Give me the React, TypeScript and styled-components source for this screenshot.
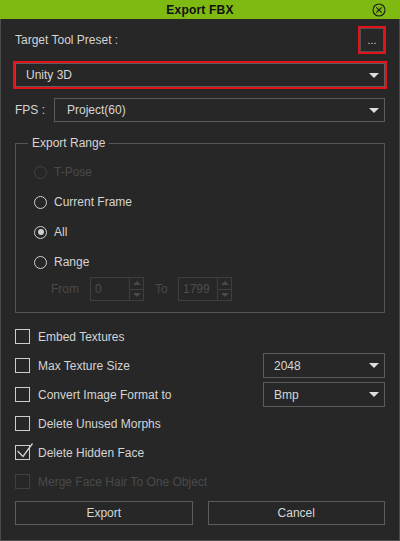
import React from "react";
import styled, { createGlobalStyle } from "styled-components";

const GlobalStyle = createGlobalStyle`
  html, body {
    margin: 0;
    padding: 0;
    background: #272727;
  }
  body {
    font-family: "Liberation Sans", Arial, sans-serif;
    font-size: 12px;
  }
`;

const Dialog = styled.div`
  width: 400px;
  height: 541px;
  display: flex;
  flex-direction: column;
  background: #272727;
  color: #d4d4d4;
`;

const TitleBar = styled.div`
  height: 19px;
  flex: none;
  display: grid;
  grid-template-columns: 1fr auto 1fr;
  align-items: center;
  padding: 0 14px;
  background: #7fba13;
  color: #111;
`;

const Title = styled.div`
  grid-column: 2;
  font-size: 12px;
  font-weight: bold;
  letter-spacing: 0.2px;
`;

const CloseIcon = styled.svg`
  grid-column: 3;
  justify-self: end;
  width: 14px;
  height: 14px;
  display: block;
`;

const Body = styled.div`
  flex: 1;
  display: flex;
  flex-direction: column;
  padding: 0 14px;
  border: 1px solid #4c4c4c;
  border-top: none;
`;

const PresetRow = styled.div`
  margin-top: 9px;
  height: 24px;
  display: flex;
  align-items: center;
  justify-content: space-between;
`;

const DotsButton = styled.div`
  width: 24px;
  height: 24px;
  box-sizing: border-box;
  margin-right: 1px;
  border: 1px solid #4e4e4e;
  box-shadow: 0 0 0 2px #e8111a;
  display: flex;
  align-items: flex-end;
  justify-content: center;
  padding-bottom: 7px;
  line-height: 8px;
  font-size: 11px;
  color: #d4d4d4;
`;

const Select = styled.div<{ $highlight?: boolean }>`
  height: 24px;
  box-sizing: border-box;
  display: flex;
  align-items: center;
  justify-content: space-between;
  padding: 0 5px 0 10px;
  border: 1px solid #5c5c5c;
  box-shadow: ${(p) => (p.$highlight ? "0 0 0 2px #e8111a" : "none")};
  color: #d6d6d6;
`;

const Caret = () => (
  <svg width="10" height="5" viewBox="0 0 10 5" style={{ display: "block" }}>
    <polygon points="0,0 10,0 5,5" fill="#dedede" />
  </svg>
);

const UnitySelect = styled(Select)`
  margin-top: 11px;
`;

const FpsRow = styled.div`
  margin-top: 11px;
  display: flex;
  align-items: center;
`;

const FpsLabel = styled.div`
  width: 39px;
`;

const FpsSelect = styled(Select)`
  flex: 1;
  padding-left: 12px;
`;

const GroupBox = styled.fieldset`
  margin: 14px 0 0;
  padding: 7px 0 11px 0;
  border: 1px solid #565656;
  min-width: 0;
`;

const Legend = styled.legend`
  margin-left: 12px;
  padding: 0 4px;
  line-height: 14px;
  color: #d4d4d4;
`;

const RangeList = styled.div`
  padding-left: 18px;
`;

const RadioRow = styled.div<{ $disabled?: boolean }>`
  height: 30px;
  display: flex;
  align-items: center;
  gap: 7px;
  color: ${(p) => (p.$disabled ? "#4a4a4a" : "#d4d4d4")};
`;

const RadioDot = styled.span<{ $checked?: boolean; $disabled?: boolean }>`
  width: 13px;
  height: 13px;
  box-sizing: border-box;
  border-radius: 50%;
  border: 1.5px solid ${(p) => (p.$disabled ? "#444" : "#cfcfcf")};
  display: flex;
  align-items: center;
  justify-content: center;

  &::after {
    content: "";
    width: 6px;
    height: 6px;
    border-radius: 50%;
    background: #cfcfcf;
    display: ${(p) => (p.$checked ? "block" : "none")};
  }
`;

const RangeRow = styled.div`
  height: 24px;
  display: flex;
  align-items: center;
  padding-left: 17px;
  color: #4a4a4a;
`;

const RangeLabel = styled.span<{ $w: number; $gap?: number }>`
  width: ${(p) => p.$w}px;
  margin-left: ${(p) => p.$gap ?? 0}px;
`;

const SpinBox = styled.div`
  width: 54px;
  height: 24px;
  box-sizing: border-box;
  border: 1px solid #3f3f3f;
  display: flex;
`;

const SpinValue = styled.div`
  flex: 1;
  display: flex;
  align-items: center;
  padding-left: 4px;
  color: #4d4d4d;
`;

const SpinArrows = styled.div`
  width: 13px;
  border-left: 1px solid #3f3f3f;
  display: flex;
  flex-direction: column;
`;

const SpinHalf = styled.div<{ $down?: boolean }>`
  flex: 1;
  display: flex;
  align-items: center;
  justify-content: center;
  border-top: ${(p) => (p.$down ? "1px solid #3f3f3f" : "none")};

  &::after {
    content: "";
    border-left: 4px solid transparent;
    border-right: 4px solid transparent;
    ${(p) =>
      p.$down
        ? "border-top: 4px solid #4a4a4a;"
        : "border-bottom: 4px solid #4a4a4a;"}
  }
`;

const Options = styled.div`
  margin-top: 11px;
  display: flex;
  flex-direction: column;
  gap: 4px;
`;

const OptionRow = styled.div<{ $disabled?: boolean }>`
  height: 25px;
  display: flex;
  align-items: center;
  gap: 8px;
  color: ${(p) => (p.$disabled ? "#4a4a4a" : "#d4d4d4")};
`;

const CheckBox = styled.span<{ $disabled?: boolean }>`
  position: relative;
  width: 15px;
  height: 15px;
  flex: none;
  box-sizing: border-box;
  border: 1px solid ${(p) => (p.$disabled ? "#404040" : "#cdcdcd")};
`;

const CheckMark = styled.svg`
  position: absolute;
  left: -1px;
  top: -1px;
  overflow: visible;
`;

const OptionLabel = styled.span`
  flex: 1;
`;

const SmallSelect = styled(Select)`
  width: 122px;
  height: 25px;
`;

const ButtonRow = styled.div`
  margin-top: 7px;
  display: grid;
  grid-template-columns: 1fr 1fr;
  gap: 15px;
`;

const Button = styled.div`
  height: 24px;
  box-sizing: border-box;
  border: 1px solid #5c5c5c;
  display: flex;
  align-items: center;
  justify-content: center;
  color: #d6d6d6;
`;

const Spin = ({ value }: { value: string }) => (
  <SpinBox>
    <SpinValue>{value}</SpinValue>
    <SpinArrows>
      <SpinHalf />
      <SpinHalf $down />
    </SpinArrows>
  </SpinBox>
);

const Check = ({
  label,
  checked,
  disabled,
  children,
}: {
  label: string;
  checked?: boolean;
  disabled?: boolean;
  children?: React.ReactNode;
}) => (
  <OptionRow $disabled={disabled}>
    <CheckBox $disabled={disabled}>
      {checked && (
        <CheckMark width="15" height="15" viewBox="0 0 15 15">
          <polyline
            points="2.5,6 8,11.5 17.5,-1.5"
            fill="none"
            stroke="#d0d0d0"
            strokeWidth="1.3"
          />
        </CheckMark>
      )}
    </CheckBox>
    <OptionLabel>{label}</OptionLabel>
    {children}
  </OptionRow>
);

export default function App() {
  return (
    <>
      <GlobalStyle />
      <Dialog>
        <TitleBar>
          <Title>Export FBX</Title>
          <CloseIcon viewBox="0 0 14 14">
            <circle cx="7" cy="7" r="6" fill="none" stroke="#1c1c1c" strokeWidth="1.1" />
            <path d="M4.3 4.3 L9.7 9.7 M9.7 4.3 L4.3 9.7" stroke="#1c1c1c" strokeWidth="1.1" />
          </CloseIcon>
        </TitleBar>
        <Body>
          <PresetRow>
            <span>Target Tool Preset :</span>
            <DotsButton>...</DotsButton>
          </PresetRow>
          <UnitySelect $highlight>
            <span>Unity 3D</span>
            <Caret />
          </UnitySelect>
          <FpsRow>
            <FpsLabel>FPS :</FpsLabel>
            <FpsSelect>
              <span>Project(60)</span>
              <Caret />
            </FpsSelect>
          </FpsRow>
          <GroupBox>
            <Legend>Export Range</Legend>
            <RangeList>
              <RadioRow $disabled>
                <RadioDot $disabled />
                T-Pose
              </RadioRow>
              <RadioRow>
                <RadioDot />
                Current Frame
              </RadioRow>
              <RadioRow>
                <RadioDot $checked />
                All
              </RadioRow>
              <RadioRow>
                <RadioDot />
                Range
              </RadioRow>
              <RangeRow>
                <RangeLabel $w={39}>From</RangeLabel>
                <Spin value="0" />
                <RangeLabel $w={23} $gap={11}>
                  To
                </RangeLabel>
                <Spin value="1799" />
              </RangeRow>
            </RangeList>
          </GroupBox>
          <Options>
            <Check label="Embed Textures" />
            <Check label="Max Texture Size">
              <SmallSelect>
                <span>2048</span>
                <Caret />
              </SmallSelect>
            </Check>
            <Check label="Convert Image Format to">
              <SmallSelect>
                <span>Bmp</span>
                <Caret />
              </SmallSelect>
            </Check>
            <Check label="Delete Unused Morphs" />
            <Check label="Delete Hidden Face" checked />
            <Check label="Merge Face Hair To One Object" disabled />
          </Options>
          <ButtonRow>
            <Button>Export</Button>
            <Button>Cancel</Button>
          </ButtonRow>
        </Body>
      </Dialog>
    </>
  );
}
